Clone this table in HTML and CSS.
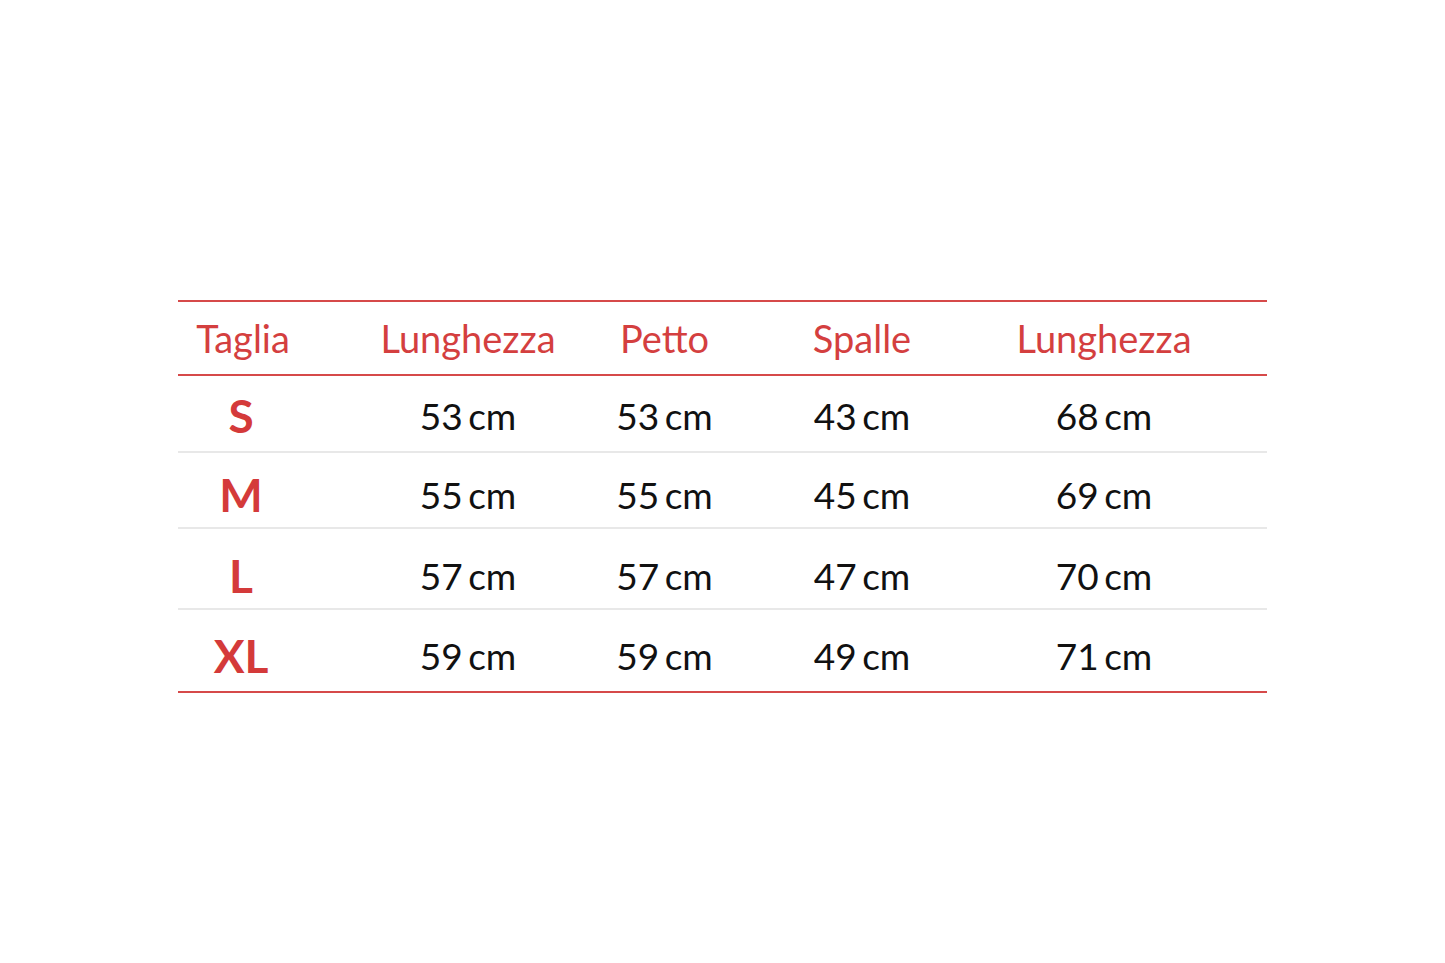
FILE: index.html
```html
<!DOCTYPE html>
<html lang="it">
<head>
<meta charset="utf-8">
<title>Tabella taglie</title>
<link rel="stylesheet" href="styles.css">
</head>
<body>
<div class="sheet">
  <div class="table">
    <div class="row head">
      <div class="cell c1">Taglia</div>
      <div class="cell c2">Lunghezza</div>
      <div class="cell c3">Petto</div>
      <div class="cell c4">Spalle</div>
      <div class="cell c5">Lunghezza</div>
    </div>
    <div class="row r1">
      <div class="cell c1 size">S</div>
      <div class="cell c2">53 cm</div>
      <div class="cell c3">53 cm</div>
      <div class="cell c4">43 cm</div>
      <div class="cell c5">68 cm</div>
    </div>
    <div class="row r2 sep">
      <div class="cell c1 size">M</div>
      <div class="cell c2">55 cm</div>
      <div class="cell c3">55 cm</div>
      <div class="cell c4">45 cm</div>
      <div class="cell c5">69 cm</div>
    </div>
    <div class="row r3 sep">
      <div class="cell c1 size">L</div>
      <div class="cell c2">57 cm</div>
      <div class="cell c3">57 cm</div>
      <div class="cell c4">47 cm</div>
      <div class="cell c5">70 cm</div>
    </div>
    <div class="row r4 sep last">
      <div class="cell c1 size">XL</div>
      <div class="cell c2">59 cm</div>
      <div class="cell c3">59 cm</div>
      <div class="cell c4">49 cm</div>
      <div class="cell c5">71 cm</div>
    </div>
  </div>
</div>
</body>
</html>
```
FILE: styles.css
```css
html, body {
  margin: 0;
  padding: 0;
  background: #ffffff;
}
body {
  font-family: Lato, "Open Sans", sans-serif;
  color: #111111;
}
.sheet {
  padding-top: 300px;
  padding-left: 178px;
}
.table {
  width: 1089px;
}
.row {
  display: grid;
  grid-template-columns: 177px 211px 197px 220px 1fr;
  align-items: center;
  box-sizing: border-box;
}
.head {
  border-top: 2px solid #d64a4a;
  border-bottom: 2px solid #d64a4a;
  height: 76px;
  padding-top: 0;
  color: #d43f3f;
}
.cell {
  display: flex;
  justify-content: center;
  white-space: nowrap;
  font-size: 37px;
  word-spacing: -4px;
}
.head .cell {
  font-size: 38px;
  word-spacing: 0;
}
.c1 { padding-right: 47px; }
.c2 { padding-left: 15px; }
.c3 { padding-left: 0; }
.c4 { padding-right: 22px; }
.c5 { padding-right: 42px; }
.size {
  color: #d43a3a;
  font-weight: 700;
  font-size: 46px;
  padding-right: 51px;
}
.sep { border-top: 2px solid #e8e8e8; }
.r1 { height: 75px; padding-top: 4px; }
.r2 { height: 76px; padding-top: 9px; }
.r3 { height: 81px; padding-top: 14px; }
.r4 { height: 85px; padding-top: 10px; }
.last { border-bottom: 2px solid #d64a4a; }
```
